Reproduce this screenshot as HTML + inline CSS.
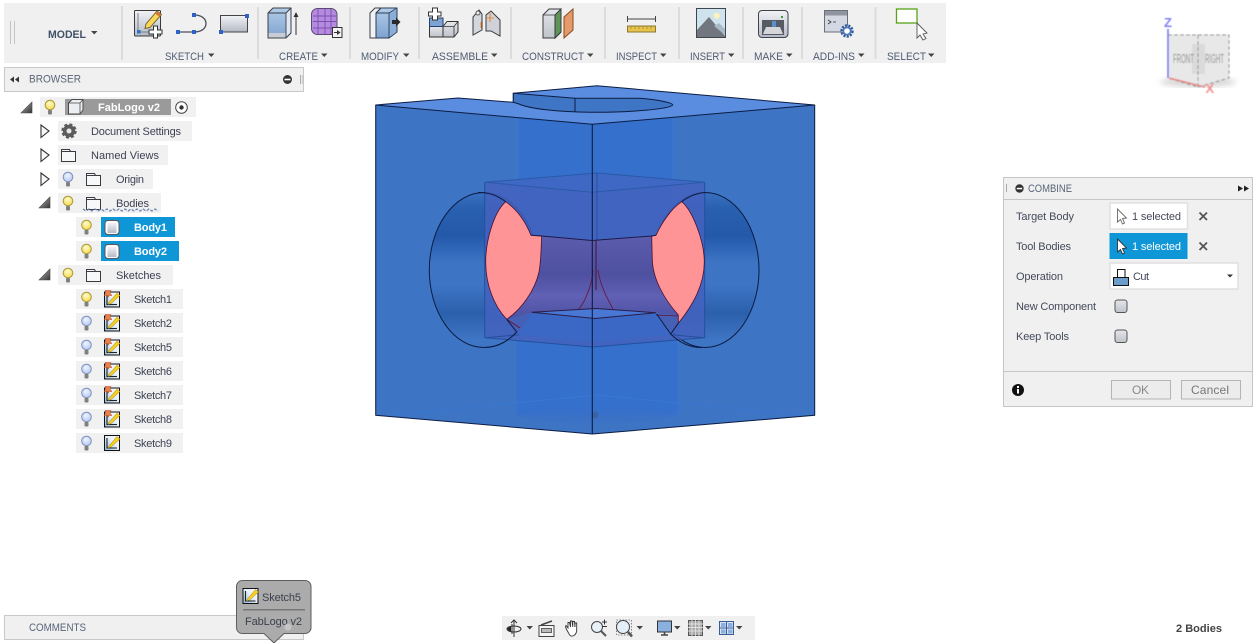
<!DOCTYPE html>
<html><head><meta charset="utf-8"><style>
html,body{margin:0;padding:0;background:#fff;width:1258px;height:643px;overflow:hidden}
svg{display:block;position:absolute;left:0;top:0}
text{font-family:"Liberation Sans",sans-serif}
.t{font-size:11px;fill:#3e4154}
.l{font-size:11px;fill:#4f5a72}
.c{font-size:11px;fill:#454a5c}
</style></head><body>
<svg width="1258" height="643" viewBox="0 0 1258 643" xmlns="http://www.w3.org/2000/svg">
<defs>
<linearGradient id="gv" x1="0" y1="0" x2="0" y2="1"><stop offset="0" stop-color="#f2f3f6"/><stop offset="1" stop-color="#b4b9c6"/></linearGradient>
<linearGradient id="gb" x1="0" y1="0" x2="0" y2="1"><stop offset="0" stop-color="#b2cce8"/><stop offset="1" stop-color="#7fa3cf"/></linearGradient>
<linearGradient id="gg" x1="0" y1="0" x2="0" y2="1"><stop offset="0" stop-color="#e4e6ea"/><stop offset="1" stop-color="#bfc3ca"/></linearGradient>
<linearGradient id="hole" x1="0" y1="0" x2="0" y2="1"><stop offset="0" stop-color="#3a70c0"/><stop offset=".1" stop-color="#2a60b0"/><stop offset=".28" stop-color="#2459aa"/><stop offset=".45" stop-color="#3d74c4"/><stop offset=".6" stop-color="#3d74c4"/><stop offset=".78" stop-color="#2b60ac"/><stop offset=".95" stop-color="#3f75c5"/></linearGradient>
<linearGradient id="pur" x1="0" y1="0" x2="0" y2="1"><stop offset="0" stop-color="#5d5cae"/><stop offset=".45" stop-color="#4e50a0"/><stop offset=".7" stop-color="#6060b4"/><stop offset="1" stop-color="#4a50a0"/></linearGradient>
<radialGradient id="by" cx=".45" cy=".35" r=".7"><stop offset="0" stop-color="#fffbd0"/><stop offset="1" stop-color="#f4d840"/></radialGradient>
<radialGradient id="bb" cx=".45" cy=".35" r=".7"><stop offset="0" stop-color="#eef3ff"/><stop offset="1" stop-color="#b4c8f0"/></radialGradient>
<linearGradient id="tri" x1="0" y1="0" x2="1" y2="1"><stop offset="0" stop-color="#bbb"/><stop offset="1" stop-color="#333"/></linearGradient>
<linearGradient id="sk" x1="1" y1="0" x2="0" y2="1"><stop offset="0" stop-color="#fff"/><stop offset=".45" stop-color="#e8f0f8"/><stop offset="1" stop-color="#8ab8e0"/></linearGradient>
<filter id="bl"><feGaussianBlur stdDeviation=".4"/></filter>
<filter id="bl2"><feGaussianBlur stdDeviation="3"/></filter>
<g id="bY"><circle cx="0" cy="-2" r="4.800" fill="url(#by)" stroke="#a8983c" stroke-width="1"/><rect x="-2" y="3" width="4" height="4.500" rx="1" fill="#808080"/></g>
<g id="bB"><circle cx="0" cy="-2" r="4.800" fill="url(#bb)" stroke="#7d8fc0" stroke-width="1"/><rect x="-2" y="3" width="4" height="4.500" rx="1" fill="#808080"/></g>
<path id="fold" d="M.5 12.5V.5H8.5L9.5 2.5H14.5V12.5Z M.5 2.5H9.5" fill="#f6f8fa" stroke="#3a3a40" stroke-width="1"/>
<g id="cyl"><rect x=".5" y=".5" width="14" height="14" rx="3" fill="#fff" stroke="#555" stroke-width="1"/><rect x="3" y="3" width="9" height="10" fill="url(#gv)"/></g>
<g id="sk0"><rect x=".5" y=".5" width="15" height="15" fill="url(#sk)" stroke="#111"/><path d="M3 3V13H13" fill="none" stroke="#222" stroke-width="1.100"/><path d="M5 11L13 1.500L16 4L7 12L4 13Z" fill="#f6d020" stroke="#a07c10" stroke-width=".5"/></g>
<g id="sk1"><use href="#sk0"/><path d="M1 -1H7L6 1.500L8 4H4.500V5.500H3.500V4H0L2 1.500Z" fill="#e8824a" stroke="#b04820" stroke-width=".5"/></g>
<path id="expT" d="M0 11L11 0V11Z" fill="url(#tri)" stroke="#444" stroke-width=".6"/>
<path id="colT" d="M.5 0L8.5 6L.5 12.5Z" fill="#f8f8f8" stroke="#333" stroke-width="1.100"/>
<path id="arr" d="M0 0H6.5L3.25 3.5Z" fill="#444"/>
</defs>

<!-- TOOLBAR -->
<rect x="4" y="3" width="942" height="60" fill="#f0f0f0"/>
<path d="M10.500 21V44M14.500 21V44" stroke="#c4c4c4" stroke-width="1"/>
<g stroke="#dcdcdc" stroke-width="2"><path d="M122 6V60M258 7V59M350 7V59M419 7V59M511 7V59M605 7V59M679 7V59M743 7V59M802 7V59M875.500 7V59"/></g>
<text x="48" y="38" font-size="11" font-weight="bold" fill="#3f5068" textLength="38" lengthAdjust="spacingAndGlyphs">MODEL</text><use href="#arr" x="91" y="31"/>
<text class="l" x="165" y="60" textLength="39" lengthAdjust="spacingAndGlyphs">SKETCH</text><use href="#arr" x="208" y="53.500"/>
<text class="l" x="279" y="60" textLength="39" lengthAdjust="spacingAndGlyphs">CREATE</text><use href="#arr" x="321" y="53.500"/>
<text class="l" x="361" y="60" textLength="38" lengthAdjust="spacingAndGlyphs">MODIFY</text><use href="#arr" x="403" y="53.500"/>
<text class="l" x="432" y="60" textLength="56" lengthAdjust="spacingAndGlyphs">ASSEMBLE</text><use href="#arr" x="491" y="53.500"/>
<text class="l" x="522" y="60" textLength="62" lengthAdjust="spacingAndGlyphs">CONSTRUCT</text><use href="#arr" x="587" y="53.500"/>
<text class="l" x="616" y="60" textLength="41" lengthAdjust="spacingAndGlyphs">INSPECT</text><use href="#arr" x="660" y="53.500"/>
<text class="l" x="690" y="60" textLength="35" lengthAdjust="spacingAndGlyphs">INSERT</text><use href="#arr" x="728" y="53.500"/>
<text class="l" x="754" y="60" textLength="29" lengthAdjust="spacingAndGlyphs">MAKE</text><use href="#arr" x="786" y="53.500"/>
<text class="l" x="813" y="60" textLength="42" lengthAdjust="spacingAndGlyphs">ADD-INS</text><use href="#arr" x="858" y="53.500"/>
<text class="l" x="887" y="60" textLength="39" lengthAdjust="spacingAndGlyphs">SELECT</text><use href="#arr" x="928" y="53.500"/>

<!-- sketch icons -->
<rect x="134.500" y="10.500" width="26" height="25.500" rx="1" fill="url(#gv)" stroke="#3a3a3a" stroke-width="1"/>
<path d="M138 13V32H156" fill="none" stroke="#7a8088" stroke-width="1"/>
<rect x="137" y="30" width="3.500" height="3.500" fill="#2f6fd0"/>
<path d="M146 24L157 11L161.500 14.500L150 27.500L145 28.500Z" fill="#f8d75a" stroke="#6a5a20" stroke-width=".9"/><path d="M157 11L161.500 14.500L159.500 17L155 13.500Z" fill="#d07a3c"/>
<path d="M153.500 26h4v4h4.500v4h-4.500v4h-4v-4h-4.500v-4h4.500Z" fill="#fff" stroke="#333" stroke-width="1"/>
<path d="M178 32H194C202 32 206 28 206 23.500C206 19 202 15 194 15" fill="none" stroke="#4c5058" stroke-width="1.300"/>
<rect x="176" y="30" width="4" height="4" fill="#2f62c8"/><rect x="192" y="30" width="4" height="4" fill="#2f62c8"/><rect x="192" y="13" width="4" height="4" fill="#2f62c8"/>
<rect x="220.500" y="15.500" width="27" height="16.500" fill="url(#gv)" stroke="#444" stroke-width="1"/>
<rect x="219" y="30" width="4" height="4" fill="#2f62c8"/><rect x="245" y="14" width="4" height="4" fill="#2f62c8"/>
<!-- create -->
<path d="M268 13L273 8H291V33L286 38H268Z" fill="url(#gb)" stroke="#3c4048" stroke-width="1"/>
<rect x="268.500" y="33" width="17" height="4.500" fill="#c8ccd4"/><path d="M286 13.500L290.500 9V32.500L286 37Z" fill="#dfe8f2"/>
<path d="M268 13H286V38M286 13L291 8" fill="none" stroke="#3c4048" stroke-width=".9"/>
<path d="M296 35V15" stroke="#333" stroke-width="1"/><path d="M293.500 17L296 12L298.500 17Z" fill="#333"/>
<rect x="311.500" y="8.500" width="25.500" height="26" rx="6" fill="#b58be0" stroke="#5a4a70" stroke-width="1"/>
<path d="M313 16H336M313 21.500H336M313 28H336M318 9V34M325 9V34M331 9V34" stroke="#7b4fb0" stroke-width=".9" fill="none"/>
<rect x="332.500" y="27.500" width="9.500" height="10" fill="#f4f4f4" stroke="#333" stroke-width="1"/><path d="M334 32H337V30L340.500 32.500L337 35V33H334Z" fill="#333"/>
<!-- modify -->
<path d="M370 38V13L375 8H381L376 13V38Z" fill="#f0f2f4" stroke="#3c4048"/>
<path d="M376 13L381 8H397V32L389 38H376Z" fill="url(#gb)" stroke="#2c3c58"/><path d="M389 13V38M376 13H389L397 8" fill="none" stroke="#2c3c58" stroke-width=".9"/><path d="M389.500 13.500L396.500 8.500V32L389.500 37Z" fill="#8aaed8"/>
<path d="M392 20H396V17.500L400.500 22L396 26.500V24H392Z" fill="#2a2a2a"/>
<!-- assemble -->
<rect x="429.500" y="26.500" width="13.500" height="10.500" fill="url(#gg)" stroke="#333"/>
<path d="M443 26.500L447 21.500H458V32L454 37H443Z" fill="url(#gg)" stroke="#333"/><path d="M443 26.500H454V37M454 26.500L458 21.500" fill="none" stroke="#333" stroke-width=".8"/>
<rect x="429.500" y="18" width="13.500" height="8.500" fill="#7ea2d2" stroke="#25406c"/>
<path d="M432.500 8h5v4h3.500v4h-3.500v4h-5v-4h-4v-4h4Z" fill="#fff" stroke="#333"/>
<path d="M473 35V17L479 10L482 14V30Z" fill="#d4d7dc" stroke="#3a3a40"/><path d="M486 31V15L491 11L500 20V36L491 31Z" fill="#cfd2d8" stroke="#3a3a40"/><circle cx="478" cy="13" r="2" fill="#f0f0f0" stroke="#555"/>
<path d="M490 13V22M481 22V28" stroke="#f08020" stroke-width="1"/><path d="M487 18H494" stroke="#f08020" stroke-width=".8"/>
<!-- construct -->
<path d="M543 15L549 9H561V32L555 38H543Z" fill="url(#gg)" stroke="#3a3a40"/><path d="M555 15L561 9V32L555 38Z" fill="#5f9457" stroke="#3a3a40"/><path d="M543 15H555V38" fill="none" stroke="#3a3a40" stroke-width=".8"/>
<path d="M564 17L573 9V30L564 38Z" fill="#e59a6a" stroke="#8a4a20"/>
<!-- inspect -->
<path d="M627.500 16V22M627.500 19H655.500M655.500 16V22" stroke="#444" stroke-width="1" fill="none"/>
<rect x="627.500" y="26" width="28" height="6" fill="#e8c34c" stroke="#8a7a30" stroke-width="1"/><path d="M631 26V29M635 26V29M639 26V29M643 26V29M647 26V29M651 26V29" stroke="#8a7a30" stroke-width=".6"/>
<!-- insert -->
<rect x="696.500" y="8.500" width="29" height="29" fill="#cfe3ef" stroke="#3f4650"/><circle cx="716.700" cy="15.700" r="3" fill="#fff4b8"/>
<path d="M697 37V30L709 17L725 36V37Z" fill="#71767f"/><path d="M714 26L719 23L725 29V35Z" fill="#a9bac6"/>
<!-- make -->
<rect x="758.500" y="10.500" width="29.500" height="27" rx="3.500" fill="url(#gv)" stroke="#3f434a"/><rect x="762" y="20" width="22" height="15" fill="#565a62"/>
<path d="M772 21H776V26L774 29L772 26Z" fill="#5890d0"/><path d="M763 34L766 27H780L783 34Z" fill="#d4d6da"/><rect x="781" y="16" width="2" height="2" fill="#3c9a3c"/>
<!-- add-ins -->
<rect x="824.500" y="10.500" width="23" height="21.500" fill="#d3d8e2" stroke="#6a6e78"/><rect x="825" y="11" width="22" height="4.500" fill="#8f949e"/>
<path d="M828 20L831 22L828 24M833 22H836" stroke="#333" stroke-width=".8" fill="none"/>
<circle cx="847" cy="31" r="5.200" fill="#cfdcf0" stroke="#345c9c" stroke-width="3" stroke-dasharray="2 1.200"/><circle cx="847" cy="31" r="4.500" fill="#4a74b8"/><circle cx="847" cy="31" r="2.800" fill="#fff"/>
<!-- select -->
<rect x="896.500" y="9" width="20.500" height="14" fill="#fff" stroke="#59a31a" stroke-width="1.300"/>
<path d="M917 23V38L920 35L923 40L926 38.500L923 34L927 33Z" fill="#fff" stroke="#555" stroke-width=".9"/>

<!-- BROWSER -->
<rect x="4.500" y="67.500" width="299" height="24" fill="#f0f0f0" stroke="#c8c8c8"/>
<path d="M10 79.500L14 76.500V82.500ZM15 79.500L19 76.500V82.500Z" fill="#333"/>
<text class="l" x="29" y="82.500" textLength="52" lengthAdjust="spacingAndGlyphs" style="fill:#5a6478">BROWSER</text>
<circle cx="287.500" cy="79.500" r="4.500" fill="#333"/><rect x="284.500" y="78.700" width="6" height="1.600" fill="#fff"/>
<path d="M300.500 75V84" stroke="#aaa"/><path d="M302.500 75V84" stroke="#ccc"/>

<!-- Tree rows -->
<g fill="#f1f1f1">
<rect x="40" y="97" width="156" height="20"/><rect x="58" y="121" width="134" height="20"/><rect x="58" y="145" width="110" height="20"/><rect x="58" y="169" width="95" height="20"/><rect x="58" y="193" width="103" height="20"/>
<rect x="76" y="217" width="99" height="20"/><rect x="76" y="241" width="103" height="20"/><rect x="58" y="265" width="115" height="20"/>
<rect x="76" y="289" width="107" height="20"/><rect x="76" y="313" width="107" height="20"/><rect x="76" y="337" width="107" height="20"/><rect x="76" y="361" width="107" height="20"/><rect x="76" y="385" width="107" height="20"/><rect x="76" y="409" width="107" height="20"/><rect x="76" y="433" width="107" height="20"/>
</g>
<use href="#expT" x="21" y="102"/><use href="#colT" x="40.500" y="125"/><use href="#colT" x="40.500" y="149"/><use href="#colT" x="40.500" y="173"/>
<use href="#expT" x="39" y="197"/><use href="#expT" x="39" y="269"/>
<use href="#bY" x="50" y="107"/><use href="#bB" x="68" y="179"/><use href="#bY" x="68" y="203"/><use href="#bY" x="86.500" y="227"/><use href="#bY" x="86.500" y="251"/><use href="#bY" x="68" y="275"/>
<use href="#bY" x="86.500" y="299"/><use href="#bB" x="86.500" y="323"/><use href="#bB" x="86.500" y="347"/><use href="#bB" x="86.500" y="371"/><use href="#bB" x="86.500" y="395"/><use href="#bB" x="86.500" y="419"/><use href="#bB" x="86.500" y="443"/>

<rect x="65" y="99" width="106" height="16" fill="#9a9a9a"/>
<path d="M68.500 114V103L72 99.500H83V110L80 114Z" fill="#eceff2" stroke="#4a4a4a"/><path d="M68.500 103H80V114M80 103L83 99.500" fill="none" stroke="#4a4a4a" stroke-width=".8"/>
<text x="98" y="111" font-size="11" font-weight="bold" fill="#fff" textLength="62">FabLogo v2</text>
<circle cx="181.500" cy="107.500" r="5.800" fill="#fff" stroke="#444" stroke-width="1"/><circle cx="181.500" cy="107.500" r="2.200" fill="#333"/>

<circle cx="69" cy="131" r="6.200" fill="#5c5c5c" stroke="#5c5c5c" stroke-width="3" stroke-dasharray="2.800 2.100"/><circle cx="69" cy="131" r="5.500" fill="#5c5c5c"/><circle cx="69" cy="131" r="2.500" fill="#e8e8e8"/>
<text class="t" x="91" y="135" textLength="90">Document Settings</text>
<use href="#fold" x="61" y="149"/><text class="t" x="91" y="159" textLength="68">Named Views</text>
<use href="#fold" x="86" y="173"/><text class="t" x="116" y="183" textLength="28">Origin</text>
<use href="#fold" x="86" y="197"/><text class="t" x="116" y="207" textLength="33">Bodies</text>
<path d="M83 209L86 211L89 209L92 211L95 209L98 211L101 209L104 211L107 209L110 211L113 209L116 211L119 209L122 211L125 209L128 211L131 209L134 211L137 209L140 211L143 209L146 211L149 209L152 211L155 209L158 211" fill="none" stroke="#6a80aa" stroke-width="1.200" stroke-dasharray="3 1.500"/>
<rect x="101" y="217" width="74" height="20" fill="#0e96d6"/><rect x="101" y="241" width="78" height="20" fill="#0e96d6"/>
<use href="#cyl" x="104.500" y="220"/><use href="#cyl" x="104.500" y="244"/>
<text x="134" y="231" font-size="11" font-weight="bold" fill="#fff" textLength="33">Body1</text>
<text x="134" y="255" font-size="11" font-weight="bold" fill="#fff" textLength="33">Body2</text>
<use href="#fold" x="86" y="269"/><text class="t" x="116" y="279" textLength="45">Sketches</text>
<use href="#sk1" x="104" y="291.500"/><use href="#sk1" x="104" y="315.500"/><use href="#sk1" x="104" y="339.500"/><use href="#sk1" x="104" y="363.500"/><use href="#sk1" x="104" y="387.500"/><use href="#sk1" x="104" y="411.500"/><use href="#sk0" x="104" y="435"/>
<text class="t" x="134" y="303" textLength="38">Sketch1</text><text class="t" x="134" y="327" textLength="38">Sketch2</text><text class="t" x="134" y="351" textLength="38">Sketch5</text><text class="t" x="134" y="375" textLength="38">Sketch6</text><text class="t" x="134" y="399" textLength="38">Sketch7</text><text class="t" x="134" y="423" textLength="38">Sketch8</text><text class="t" x="134" y="447" textLength="38">Sketch9</text>

<!-- MODEL -->
<path d="M375.700 105L592.300 124.300L814.700 105V415.300L592.300 434L375.700 415.300Z" fill="#3d74c4"/>
<path d="M519 112H672.700V290H519Z M516.700 340H678V415H516.700Z" fill="#3470cc"/>
<path d="M516.700 112V290M672.700 112V290M678 340V415" stroke="#3a78dc" stroke-width="1" opacity=".6" fill="none"/>
<path d="M375.700 105L458 98L513.300 102.300V93.300L597 85.700L814.700 105L592.300 124.300Z" fill="#5a8de0" stroke="#0c1c42" stroke-width="1" stroke-linejoin="round"/>
<path d="M513.300 93.300L575 98.300H640C660 100 672.700 103 672.700 105C670 109 630 112.500 590 112.300C560 112 530 109 519 104L513.300 102.300Z" fill="#3f75c5" stroke="#0c1c42" stroke-width="1"/>
<path d="M575 98.500V111.500" stroke="#0c1c42" stroke-width="1"/>
<ellipse cx="484" cy="270" rx="54.700" ry="77.500" fill="url(#hole)" stroke="#0c1c42" stroke-width="1"/>
<ellipse cx="705" cy="270" rx="54" ry="77.500" fill="url(#hole)" stroke="#0c1c42" stroke-width="1"/>
<path d="M484.700 182.300L597 173L704.700 182.300V337.700L592.300 347L484.700 337.700Z" fill="#4462be" fill-opacity=".85"/>
<path d="M484.700 182.300L597 173L704.700 182.300L592.300 192.300Z" fill="#3f68c4" stroke="#2a5aa8" stroke-width="1"/>
<path d="M484.700 182.300V337.700L592.300 347L704.700 337.700V182.300M484.700 337.700L597 328L704.700 337.700M597 173V328" fill="none" stroke="#23509c" stroke-width="1"/>
<path d="M531 235.300L592 240.500L656 235.300L680 322L656 312.700H531.700L506.700 319.300Z" fill="url(#pur)"/>
<path d="M506.700 319.300L531.700 312.300L518 332Z" fill="#4560b4"/>
<path d="M656 312.700L678.300 315V323.300L672 332Z" fill="#4560b4"/>
<path d="M531.700 312.300L518 335L592 342L672 335L656 312.700L595 318.500Z" fill="#3a68c4"/>
<path d="M531.700 312.300L596 308.500L656 312.700L595 318.500Z" fill="#4878d4" stroke="#2a1c48" stroke-width="1"/>
<path d="M593 270C592 285 586 300 579 309M598 270C600 285 607 298 613 309" fill="none" stroke="#6a1030" stroke-width=".8"/>
<path d="M656 315L678.300 316M506.700 319.300L520 328" stroke="#6a1030" stroke-width=".8" fill="none"/>
<path d="M505.700 201.700C494 212 485.700 240 485.700 262C485.700 285 494 306 506.700 319.300C522 309 535 290 539 272C541 262 541 250 541.700 236L531 235.300C524 218 515 208 505.700 201.700Z" fill="#ff9496" stroke="#4a1030" stroke-width=".8"/>
<path d="M681.700 201.700C692 210 704.300 240 704.300 262C704.300 285 693 305 678.300 323.300V315C665 300 653 280 652.300 260L651.700 236L656 235.300C662 222 672 208 681.700 201.700Z" fill="#ff9496" stroke="#4a1030" stroke-width=".8"/>
<path d="M531 235.300L541.700 236L592 240.500L651.700 236L656 235.300" fill="none" stroke="#1c1c48" stroke-width="1"/>
<path d="M505.700 201.700A54.700 77.500 0 0 0 478 192.500M681.700 201.700A54 77.500 0 0 1 707 192.500" fill="none" stroke="#0c1c42" stroke-width="1"/>
<path d="M487 347.500A54.700 77.500 0 0 0 516.700 332L506.700 319.300M702 347.500A54 77.500 0 0 1 670.700 334L656.700 314M670.700 334L678.300 323.300" fill="none" stroke="#0c1c42" stroke-width="1"/>
<path d="M392 415L597 395L800 415" fill="none" stroke="#3a78d0" stroke-width="1"/>
<ellipse cx="596" cy="415" rx="78" ry="8" fill="#3a70c8" fill-opacity=".5"/>
<circle cx="595" cy="415" r="3.500" fill="#3a62a8"/>
<path d="M592.300 124.300V434" stroke="#0c1c42" stroke-width="1.100"/>
<path d="M596 240V290" stroke="#4a1030" stroke-width="1"/>
<path d="M375.700 105V415.300L592.300 434L814.700 415.300V105" fill="none" stroke="#0c1c42" stroke-width="1"/>

<!-- VIEWCUBE -->
<ellipse cx="1198" cy="82" rx="38" ry="5" fill="#bbb" opacity=".6" filter="url(#bl2)"/>
<g filter="url(#bl)">
<path d="M1168 35H1229V78L1198 87L1168 78Z" fill="#e8e8e8"/>
<rect x="1192" y="44" width="13" height="30" fill="#dadada"/>
<path d="M1168 35H1229V78L1198 87L1168 78ZM1198 35V87" fill="none" stroke="#909090" stroke-width="1" stroke-dasharray="4 2"/>
<path d="M1168 29V78" stroke="#7070f0" stroke-width="1.500"/><path d="M1169 78L1205 87" stroke="#e88888" stroke-width="1.500"/>
<text x="1173" y="63" font-size="13" fill="#8a8a8a" textLength="21" lengthAdjust="spacingAndGlyphs">FRONT</text>
<text x="1205" y="63" font-size="13" fill="#8a8a8a" textLength="19" lengthAdjust="spacingAndGlyphs">RIGHT</text>
<text x="1164" y="27" font-size="13" font-weight="bold" fill="#8080f0">Z</text>
<text x="1205.500" y="93" font-size="13" font-weight="bold" fill="#f09090">X</text>
</g>

<!-- COMBINE -->
<rect x="1003.500" y="177.500" width="249" height="229" fill="#f0f0f0" stroke="#c6c6c6"/>
<path d="M1004 199.500H1252M1004 371.500H1252" stroke="#c6c6c6"/>
<path d="M1006.500 184V192" stroke="#aaa"/>
<circle cx="1019.500" cy="188.500" r="4.200" fill="#333"/><rect x="1016.800" y="187.800" width="5.400" height="1.500" fill="#fff"/>
<text x="1028" y="192" font-size="11" fill="#5a6478" textLength="44" lengthAdjust="spacingAndGlyphs">COMBINE</text>
<path d="M1238 185.500L1243 188.500L1238 191.500ZM1244 185.500L1249 188.500L1244 191.500Z" fill="#222"/>
<text class="c" x="1016" y="220" textLength="58">Target Body</text>
<text class="c" x="1016" y="250" textLength="55">Tool Bodies</text>
<text class="c" x="1016" y="280" textLength="47">Operation</text>
<text class="c" x="1016" y="310" textLength="80">New Component</text>
<text class="c" x="1016" y="340" textLength="53">Keep Tools</text>
<rect x="1110" y="203" width="77.500" height="26" fill="#fff" stroke="#e0e0e0" stroke-width="1.500"/>
<path d="M1117.500 209V222L1120.500 219.500L1122.500 224L1124.500 223L1122.500 218.500L1126.500 218Z" fill="#fff" stroke="#666" stroke-width=".9"/>
<text x="1132" y="220" font-size="11" fill="#45485a" textLength="49">1 selected</text>
<path d="M1199.500 212.500L1207 220M1207 212.500L1199.500 220M1199.500 242.500L1207 250M1207 242.500L1199.500 250" stroke="#555" stroke-width="1.800"/>
<rect x="1109.500" y="233" width="78" height="26" fill="#0e96d6"/>
<path d="M1117.500 239V252L1120.500 249.500L1122.500 254L1124.500 253L1122.500 248.500L1126.500 248Z" fill="#fff" stroke="#333" stroke-width=".9"/>
<text x="1132" y="250" font-size="11" fill="#fff" textLength="49">1 selected</text>
<rect x="1110" y="263" width="128" height="26" fill="#fff" stroke="#e0e0e0" stroke-width="1.500"/>
<rect x="1113.500" y="277.500" width="15" height="8" fill="#6a9ccc" stroke="#111"/><rect x="1117.500" y="269.500" width="7.500" height="8" fill="#fff" stroke="#111"/>
<text x="1133" y="280" font-size="11" fill="#45485a" textLength="16">Cut</text>
<path d="M1227 274.500H1233L1230 277.500Z" fill="#333"/>
<rect x="1115" y="300" width="12" height="12.500" rx="2.500" fill="url(#gg)" stroke="#555"/>
<rect x="1115" y="330" width="12" height="12.500" rx="2.500" fill="url(#gg)" stroke="#555"/>
<circle cx="1018" cy="390" r="6" fill="#111"/><rect x="1017" y="389" width="2" height="4.500" fill="#fff"/><rect x="1017" y="386" width="2" height="2" fill="#fff"/>
<rect x="1111.500" y="380.500" width="59" height="18.500" fill="#ececec" stroke="#b4b4b4"/>
<rect x="1181.500" y="380.500" width="59" height="18.500" fill="#ececec" stroke="#b4b4b4"/>
<text x="1132" y="394" font-size="12" fill="#8a8a8a" textLength="17">OK</text>
<text x="1191" y="394" font-size="12" fill="#777" textLength="38">Cancel</text>

<!-- COMMENTS -->
<rect x="4.500" y="615.500" width="299" height="24" fill="#f0f0f0" stroke="#c8c8c8"/>
<text x="29" y="631" font-size="11" fill="#5a6478" textLength="57" lengthAdjust="spacingAndGlyphs">COMMENTS</text>

<!-- TOOLTIP -->
<path d="M242 580.500H305A6 6 0 0 1 311 586.500V627A6 6 0 0 1 305 633.500H284L274 643L264 633.500H242A6 6 0 0 1 236.500 627V586.500A6 6 0 0 1 242 580.500Z" fill="#ababab" stroke="#5e5e5e" stroke-width="1"/>
<use href="#sk0" x="242.500" y="588"/>
<text x="262" y="601" font-size="11" fill="#3a3f4a" textLength="39">Sketch5</text>
<rect x="243" y="609" width="62" height="1.500" fill="#777"/>
<text x="245" y="625" font-size="11" fill="#3a3f4a" textLength="57">FabLogo v2</text>
<circle cx="288" cy="627" r="3.500" fill="#c4c4c4"/>

<!-- NAV BAR -->
<rect x="502" y="616" width="253" height="24" fill="#f0f0f0"/>
<ellipse cx="514" cy="629" rx="7" ry="3" fill="none" stroke="#333" stroke-width="1"/><path d="M514 620V637M511 623L514 620L517 623M512 624V634" stroke="#333" fill="none" stroke-width="1"/><path d="M507 629L511 626V632Z" fill="#222"/>
<use href="#arr" x="526.500" y="626"/>
<rect x="539" y="625.500" width="15" height="11" fill="#f4f4f4" stroke="#444"/><rect x="541.500" y="628.500" width="10" height="4" fill="#bbb" stroke="#444" stroke-width=".8"/><path d="M541 625L552 621" stroke="#444" stroke-width="1.500"/>
<path d="M568 632C566 629 565 626 566 625.500L568 628V622.500L569.500 622.500L570.500 627V621L572 621L572.800 627V621.500H574.500L575 627V623L576.700 623V631C576 635 573 636.500 571 636C569.500 635.500 569 634 568 632Z" fill="#fff" stroke="#333" stroke-width=".9"/>
<circle cx="597" cy="627" r="5.500" fill="#e8f0f8" stroke="#444"/><path d="M601 631L606 636" stroke="#555" stroke-width="2"/><path d="M602 622H607M604.500 619.500V624.500M602 626.500H607" stroke="#333" stroke-width="1"/>
<rect x="616.500" y="620" width="15" height="15" fill="none" stroke="#888" stroke-dasharray="1.500 1.500"/>
<circle cx="623" cy="627" r="6.500" fill="#e4eef8" stroke="#444"/><path d="M628 632L632 636.500" stroke="#555" stroke-width="2.500"/>
<use href="#arr" x="636.500" y="626"/>
<rect x="657.500" y="621" width="14" height="11" fill="#8ab0e0" stroke="#333"/><path d="M661 635H668M664.500 632V635" stroke="#444" stroke-width="1.500"/>
<use href="#arr" x="674" y="626"/>
<rect x="688.500" y="620.500" width="14" height="15" fill="#aaa" stroke="#555"/><path d="M688 624H703M688 627.500H703M688 631H703M692 620V636M695.500 620V636M699 620V636" stroke="#eee" stroke-width=".7"/>
<use href="#arr" x="705" y="626"/>
<rect x="719.500" y="621.500" width="14" height="13" fill="#dbe5f2" stroke="#3c5c98"/><path d="M719 628H734M726.500 621V635" stroke="#3c5c98"/><rect x="721" y="623" width="4.500" height="4" fill="#8ab0e0"/><rect x="728" y="623" width="4.500" height="4" fill="#8ab0e0"/><rect x="721" y="629.500" width="4.500" height="4" fill="#8ab0e0"/><rect x="728" y="629.500" width="4.500" height="4" fill="#8ab0e0"/>
<use href="#arr" x="736" y="626"/>

<text x="1176" y="632" font-size="11" font-weight="bold" fill="#444" textLength="46" lengthAdjust="spacingAndGlyphs">2 Bodies</text>
</svg>
</body></html>
